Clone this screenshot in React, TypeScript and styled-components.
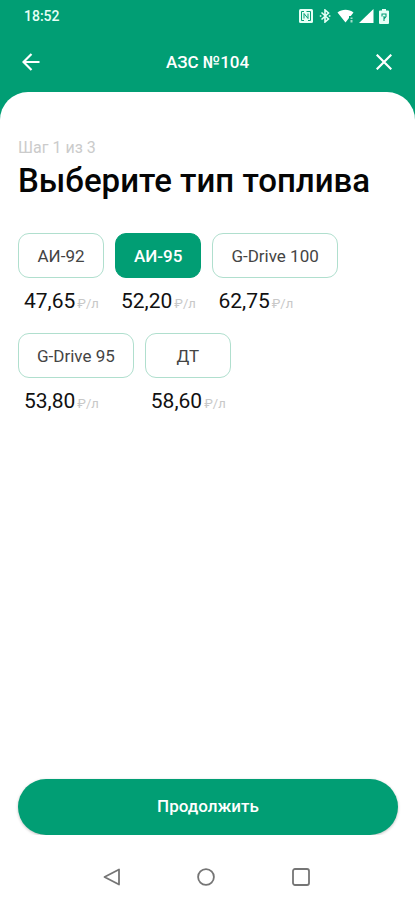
import { useState } from "react";
import styled, { createGlobalStyle } from "styled-components";

const green = "#019e74";

const GlobalStyle = createGlobalStyle`
  *, *::before, *::after { box-sizing: border-box; }
  body { margin: 0; background: #fff; font-family: Roboto, sans-serif; }
  button { font-family: inherit; padding: 0; border: 0; background: none; cursor: pointer; }
`;

const Screen = styled.div`
  min-height: 100vh;
  display: flex;
  flex-direction: column;
  background: ${green};
`;

const StatusBar = styled.div`
  height: 32px;
  padding: 0 26px 0 24px;
  display: flex;
  align-items: center;
  justify-content: space-between;
  color: #e6fff6;
  font-size: 14px;
  line-height: 16px;
  font-weight: 500;
`;

const StatusIcons = styled.div`
  display: flex;
  align-items: center;
  gap: 5px;
`;

const Header = styled.header`
  height: 60px;
  padding: 0 18px;
  display: flex;
  align-items: center;
  justify-content: space-between;
  color: #fff;
`;

const HeaderTitle = styled.h1`
  margin: 0;
  font-size: 17px;
  line-height: 20px;
  font-weight: 500;
`;

const IconButton = styled.button`
  width: 26px;
  height: 32px;
  display: flex;
  align-items: center;
  justify-content: center;
  color: inherit;
`;

const Sheet = styled.main`
  flex: 1;
  padding: 46px 17px 0 18px;
  display: flex;
  flex-direction: column;
  background: #fff;
  border-radius: 28px 28px 0 0;
`;

const Step = styled.p`
  margin: 0;
  color: #cbcbcb;
  font-size: 16px;
  line-height: 20px;
`;

const Title = styled.h2`
  margin: 3px 0 0;
  color: #050505;
  font-size: 33px;
  line-height: 40px;
  font-weight: 500;
`;

const FuelList = styled.div`
  margin-top: 32px;
  display: flex;
  flex-wrap: wrap;
  gap: 18px 11px;
`;

const FuelItem = styled.div`
  display: flex;
  flex-direction: column;
  gap: 9px;
`;

const Chip = styled.button<{ $active: boolean }>`
  && {
    height: 45px;
    min-width: 86px;
    padding: 0 18px;
    border: 1px solid ${(p) => (p.$active ? green : "#b0dfce")};
    border-radius: 11px;
    background: ${(p) => (p.$active ? green : "#fff")};
    color: ${(p) => (p.$active ? "#fff" : "#444")};
    font-size: 17px;
    line-height: 20px;
    font-weight: ${(p) => (p.$active ? 500 : 400)};
  }
`;

const Price = styled.div`
  height: 28px;
  padding-left: 6px;
  display: flex;
  align-items: baseline;
  gap: 2px;
  color: #111;
  font-size: 21px;
  line-height: 28px;
`;

const Unit = styled.span`
  color: #c8c8c8;
  font-size: 13px;
  line-height: 16px;
`;

const Continue = styled.button`
  && {
    height: 56px;
    margin-top: auto;
    padding-bottom: 2px;
    border-radius: 28px;
    background: ${green};
    color: #fff;
    font-size: 17px;
    line-height: 20px;
    font-weight: 500;
    box-shadow: 0 1px 3px rgba(0, 0, 0, 0.25);
  }
`;

const SystemNav = styled.nav`
  height: 65px;
  padding: 18px 3px 0 0;
  display: flex;
  align-items: center;
  justify-content: center;
  gap: 69px;
  background: #fff;
  color: #757575;
`;

const fuels = [
  { name: "АИ-92", price: "47,65" },
  { name: "АИ-95", price: "52,20" },
  { name: "G-Drive 100", price: "62,75" },
  { name: "G-Drive 95", price: "53,80" },
  { name: "ДТ", price: "58,60" },
];

function NfcIcon() {
  return (
    <svg width="14" height="14" viewBox="0 0 14 14" fill="none">
      <rect width="14" height="14" rx="1.5" fill="#e6fff6" />
      <path d="M5 2.500H2.500v9H5M5 4.500v5M5 4.500l4 5V4.500M7.500 2.500h4v9H9" stroke={green} strokeWidth="1" />
    </svg>
  );
}

function BluetoothIcon() {
  return (
    <svg width="14" height="14" viewBox="0 0 14 14" fill="none">
      <path d="M3.500 3.500l7 6.500L7 13V1l3.500 3-7 6.500" stroke="#e6fff6" strokeWidth="1.600" />
      <path d="M1.800 6.200h1.600v1.600H1.800zM10.800 6.200h1.600v1.600h-1.600z" fill="#e6fff6" />
    </svg>
  );
}

function WifiIcon() {
  return (
    <svg width="17" height="14" viewBox="0 0 17 14">
      <path d="M.5 3.600C5-.200 12-.200 16.500 3.600L13.800 7H12v2L8.500 13.500z" fill="#fff" />
      <path d="M13.500 8.500h2v1.500h-2zM13.500 11h2v2.500h-2z" fill="#a5dcc9" />
    </svg>
  );
}

function SignalIcon() {
  return (
    <svg width="15" height="14" viewBox="0 0 15 14">
      <path d="M14.500 0v14H0z" fill="#fff" />
    </svg>
  );
}

function BatteryIcon() {
  return (
    <svg width="10" height="15" viewBox="0 0 10 15">
      <path d="M3 0h4v1.500h2a1 1 0 0 1 1 1V14a1 1 0 0 1-1 1H1a1 1 0 0 1-1-1V2.500a1 1 0 0 1 1-1h2z" fill="#e6fff6" />
      <path d="M3 7.500V5h4v2.500L5 10V7M5 10.500V12" fill="none" stroke={green} strokeWidth="1.100" />
    </svg>
  );
}

export default function App() {
  const [selected, setSelected] = useState("АИ-95");

  return (
    <>
      <GlobalStyle />
      <Screen>
        <StatusBar>
          <time>18:52</time>
          <StatusIcons aria-hidden="true">
            <NfcIcon />
            <BluetoothIcon />
            <WifiIcon />
            <SignalIcon />
            <BatteryIcon />
          </StatusIcons>
        </StatusBar>
        <Header>
          <IconButton type="button" aria-label="Назад">
            <svg width="18" height="18" viewBox="0 0 18 18" fill="none" stroke="currentColor" strokeWidth="2.200">
              <path d="M17.500 9H1.500M9.500 1L1.500 9l8 8" />
            </svg>
          </IconButton>
          <HeaderTitle>АЗС №104</HeaderTitle>
          <IconButton type="button" aria-label="Закрыть">
            <svg width="16" height="16" viewBox="0 0 16 16" fill="none" stroke="currentColor" strokeWidth="2.200">
              <path d="M.7.7l14.600 14.600M15.300.7L.7 15.300" />
            </svg>
          </IconButton>
        </Header>
        <Sheet>
          <Step>Шаг 1 из 3</Step>
          <Title>Выберите тип топлива</Title>
          <FuelList role="group" aria-label="Тип топлива">
            {fuels.map(({ name, price }) => (
              <FuelItem key={name}>
                <Chip
                  type="button"
                  $active={selected === name}
                  aria-pressed={selected === name}
                  onClick={() => setSelected(name)}
                >
                  {name}
                </Chip>
                <Price>
                  {price}
                  <Unit>₽/л</Unit>
                </Price>
              </FuelItem>
            ))}
          </FuelList>
          <Continue type="button">Продолжить</Continue>
        </Sheet>
        <SystemNav aria-label="Системная навигация">
          <IconButton type="button" aria-label="Назад">
            <svg width="18" height="18" viewBox="0 0 18 18" fill="none" stroke="currentColor" strokeWidth="1.800" strokeLinejoin="round">
              <path d="M17 1.500v15L2.500 9z" />
            </svg>
          </IconButton>
          <IconButton type="button" aria-label="Домой">
            <svg width="18" height="18" viewBox="0 0 18 18" fill="none" stroke="currentColor" strokeWidth="1.800">
              <circle cx="9" cy="9" r="7.900" />
            </svg>
          </IconButton>
          <IconButton type="button" aria-label="Последние приложения">
            <svg width="18" height="18" viewBox="0 0 18 18" fill="none" stroke="currentColor" strokeWidth="1.800">
              <rect x="1" y="1" width="16" height="16" rx="2" />
            </svg>
          </IconButton>
        </SystemNav>
      </Screen>
    </>
  );
}
